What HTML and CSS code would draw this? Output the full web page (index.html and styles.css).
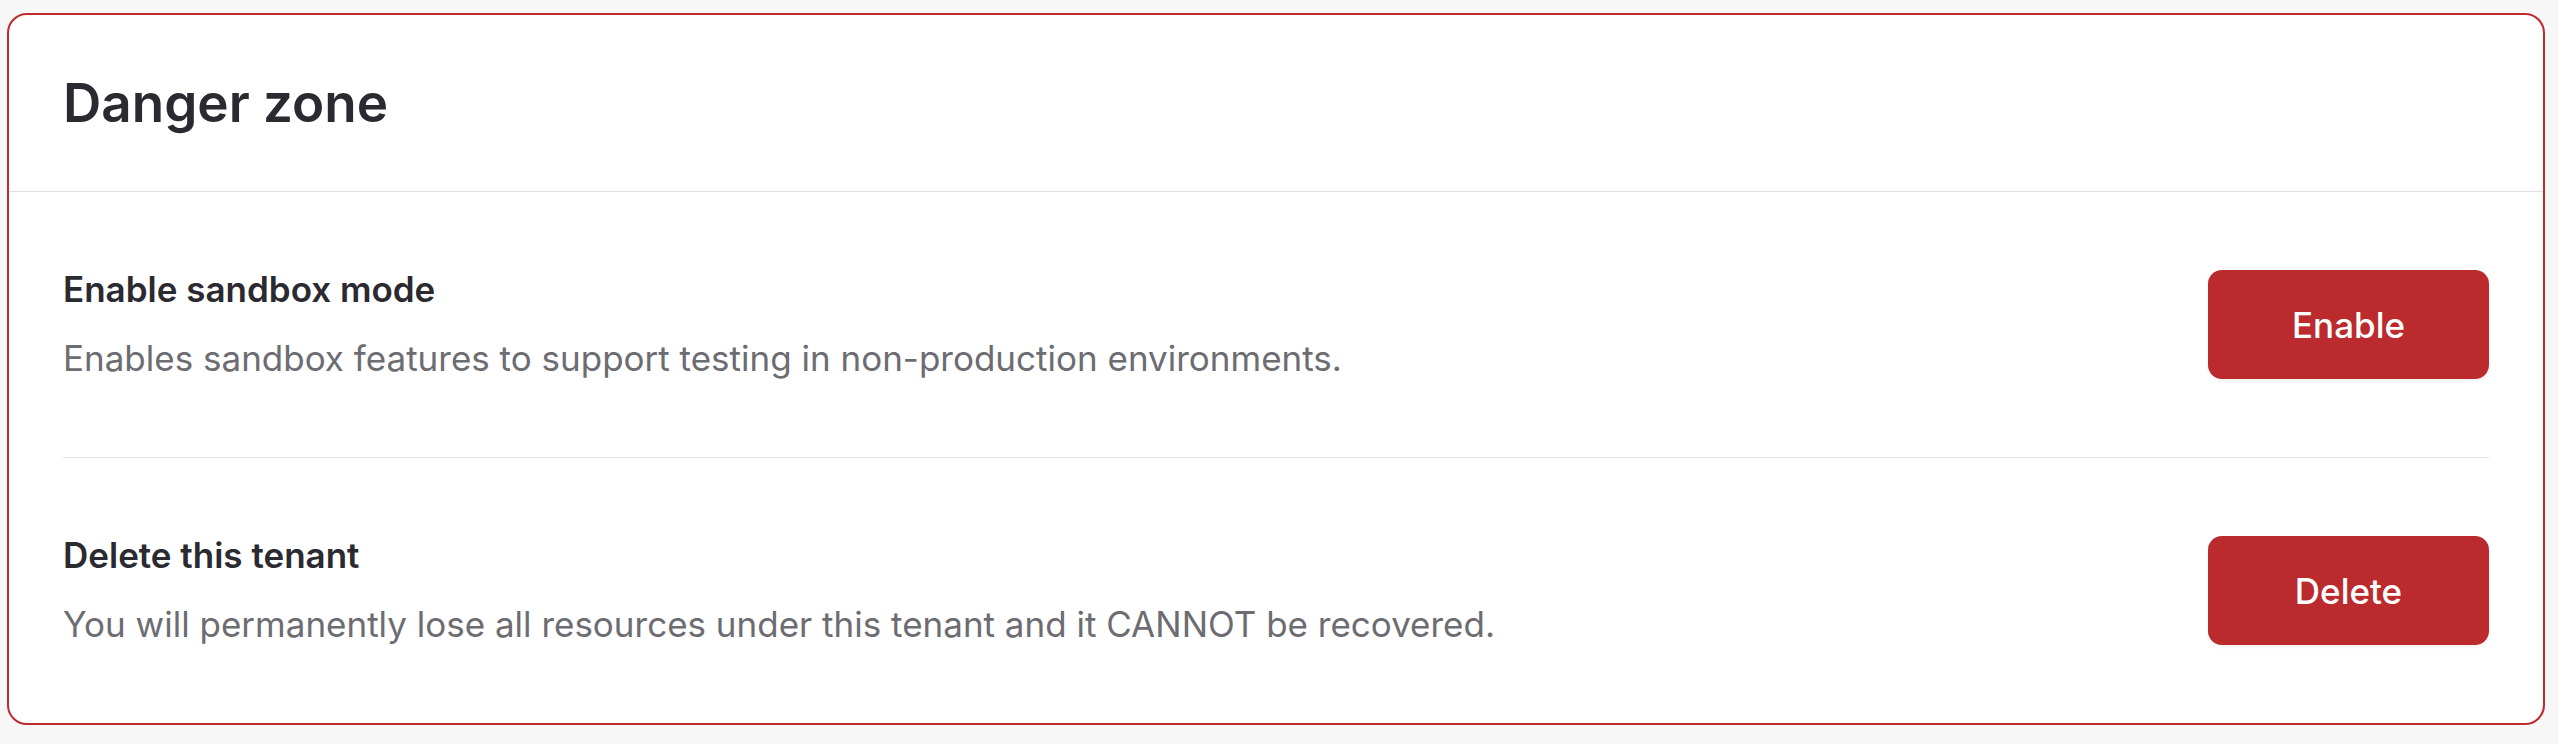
FILE: index.html
```html
<!DOCTYPE html>
<html lang="en">

<head>
    <meta charset="utf-8">
    <title>Danger zone</title>
    <link rel="stylesheet" href="styles.css">
</head>

<body>
    <section class="danger-card">
        <header class="danger-header">
            <h2>Danger zone</h2>
        </header>

        <div class="danger-list">
            <div class="danger-row">
                <div class="danger-text">
                    <div class="danger-title">Enable sandbox mode</div>
                    <div class="danger-desc">Enables sandbox features to support testing in non-production environments.</div>
                </div>
                <button class="danger-button">Enable</button>
            </div>

            <div class="danger-row">
                <div class="danger-text">
                    <div class="danger-title">Delete this tenant</div>
                    <div class="danger-desc">You will permanently lose all resources under this tenant and it CANNOT be recovered.</div>
                </div>
                <button class="danger-button">Delete</button>
            </div>
        </div>
    </section>
</body>

</html>
```

FILE: styles.css
```css
body {
    margin: 0;
    padding: 13px 13px 0 7px;
    background-color: #f7f7f7;
    font-family: Inter, 'Noto Sans', sans-serif;
    color: #2a2a30;
}

.danger-card {
    background-color: #fff;
    border: 2px solid #be2a2e;
    border-radius: 20px;
}

.danger-header {
    height: 176px;
    display: flex;
    align-items: center;
    padding: 0 54px;
    border-bottom: 1px solid #e2e2e6;
}

.danger-header h2 {
    margin: 0;
    font-size: 53px;
    font-weight: 600;
}

.danger-list {
    padding: 0 54px;
}

.danger-row {
    display: flex;
    align-items: center;
    justify-content: space-between;
    padding: 75px 0;
}

.danger-row + .danger-row {
    border-top: 1px solid #e2e2e6;
}

.danger-text {
    display: flex;
    flex-direction: column;
    gap: 23px;
}

.danger-title {
    font-size: 35px;
    line-height: 44px;
    font-weight: 600;
}

.danger-desc {
    font-size: 35px;
    line-height: 48px;
    color: #6c6c72;
}

.danger-button {
    width: 281px;
    height: 109px;
    background-color: #bb2b2d;
    color: #fff;
    border: none;
    border-radius: 14px;
    font-family: inherit;
    font-size: 35px;
    font-weight: 500;
    box-shadow: 0 2px 4px rgba(0, 0, 0, 0.06);
    cursor: pointer;
}
```
